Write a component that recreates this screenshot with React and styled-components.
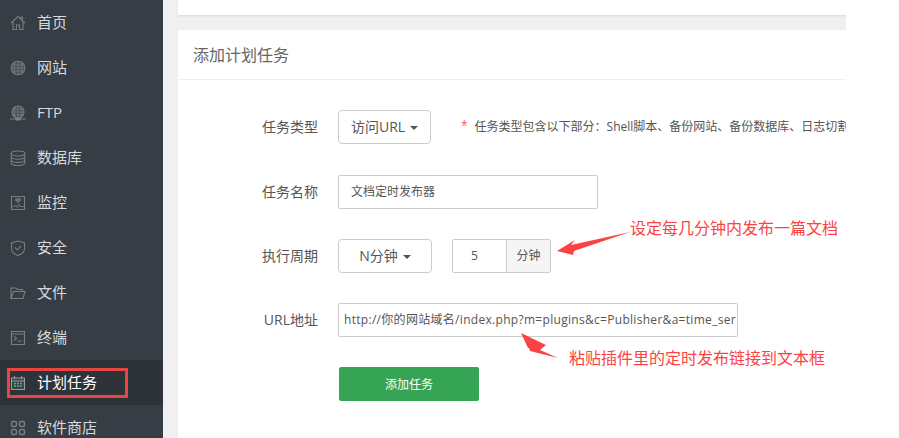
import React from "react";
import styled, { createGlobalStyle } from "styled-components";

const Global = createGlobalStyle`
  html, body { margin: 0; padding: 0; background: #fff; }
  body { font-family: "Open Sans", "Noto Sans CJK SC", sans-serif; overflow: hidden; }
  * { box-sizing: border-box; }
`;

const Page = styled.div`
  position: relative;
  display: flex;
  width: 899px;
  height: 438px;
  overflow: hidden;
  background: #fff;
`;

const Sidebar = styled.nav`
  width: 163px;
  height: 438px;
  flex: none;
  background: #363d44;
  overflow: hidden;
`;

const NavItem = styled.div`
  display: flex;
  align-items: center;
  height: 45px;
  padding-left: 10px;
  gap: 11px;
  background: ${(p) => (p.$active ? "#2e333a" : "transparent")};
  color: ${(p) => (p.$active ? "#fff" : "#d6dade")};
  font-size: 15px;
  line-height: 20px;
`;

const NavText = styled.span`
  padding-bottom: 2px;
`;

const NavIcon = styled.svg`
  width: 16px;
  height: 16px;
  flex: none;
  fill: none;
  stroke: #7a7e82;
  stroke-width: 1.1;
`;

const Main = styled.main`
  width: 683px;
  height: 438px;
  flex: none;
  padding-left: 15px;
  background: #f0f0f0;
  overflow: hidden;
`;

const TopCard = styled.div`
  height: 15px;
  background: #fff;
  box-shadow: 0 1px 2px rgba(0, 0, 0, 0.1);
`;

const Card = styled.section`
  margin-top: 15px;
  height: 408px;
  background: #fff;
`;

const CardTitle = styled.h2`
  margin: 0;
  height: 50px;
  padding: 0 0 1px 15px;
  display: flex;
  align-items: center;
  border-bottom: 1px solid #eee;
  font-size: 16px;
  font-weight: 400;
  color: #666;
`;

const Form = styled.div`
  display: flex;
  flex-direction: column;
  gap: 30px;
  padding-top: 30px;
`;

const Row = styled.div`
  display: flex;
  align-items: center;
  height: 34px;
  margin-bottom: ${(p) => p.$extra || 0}px;
  white-space: nowrap;
`;

const Label = styled.label`
  width: 140px;
  flex: none;
  padding-bottom: 2px;
  text-align: right;
  font-size: 14px;
  color: #555;
`;

const Select = styled.div`
  display: flex;
  flex: none;
  align-items: center;
  justify-content: center;
  gap: 5px;
  margin-left: 20px;
  width: ${(p) => p.$w}px;
  height: 34px;
  padding-bottom: 2px;
  border: 1px solid #ccc;
  border-radius: 4px;
  font-size: 14px;
  color: #555;
`;

const Caret = styled.i`
  width: 0;
  height: 0;
  margin-top: 3px;
  border-top: 4px solid #555;
  border-left: 4px solid transparent;
  border-right: 4px solid transparent;
`;

const Hint = styled.div`
  display: flex;
  flex: none;
  gap: 7px;
  margin-left: 30px;
  padding-bottom: 2px;
  font-size: 12px;
  color: #555;
`;

const Star = styled.span`
  color: #f25a5a;
`;

const Input = styled.div`
  display: flex;
  flex: none;
  align-items: center;
  margin-left: 20px;
  width: ${(p) => p.$w}px;
  height: 34px;
  padding-left: ${(p) => p.$pad}px;
  padding-bottom: 2px;
  border: 1px solid #ccc;
  border-radius: 2px;
  font-size: 12px;
  letter-spacing: ${(p) => p.$track || 0}px;
  color: #555;
  overflow: hidden;
`;

const Group = styled.div`
  display: flex;
  flex: none;
  margin-left: 20px;
  height: 34px;
  width: 99px;
  border: 1px solid #ccc;
  border-radius: 2px;
  font-size: 12px;
  color: #555;
`;

const GroupValue = styled.div`
  width: 53px;
  padding-left: 18px;
  line-height: 32px;
`;

const GroupAddon = styled.div`
  flex: 1;
  text-align: center;
  line-height: 32px;
  background: #f5f5f5;
  border-left: 1px solid #ccc;
`;

const Submit = styled.button`
  margin: 30px 0 0 161px;
  display: block;
  width: 140px;
  height: 34px;
  padding-bottom: 2px;
  border: 0;
  border-radius: 2px;
  background: #35a455;
  color: #fff;
  font-family: inherit;
  font-size: 12px;
`;

const Note = styled.span`
  position: absolute;
  left: ${(p) => p.$x}px;
  top: ${(p) => p.$y}px;
  font-family: "Noto Sans CJK SC", sans-serif;
  font-size: 16px;
  line-height: 20px;
  color: #fb4343;
  white-space: nowrap;
`;

const Arrow = styled.svg`
  position: absolute;
  left: 0;
  top: 0;
  width: 899px;
  height: 438px;
  pointer-events: none;
`;

const Mark = styled.div`
  position: absolute;
  left: 7px;
  top: 368px;
  width: 121px;
  height: 30px;
  border: 3px solid #e84545;
  pointer-events: none;
`;

const icons = {
  home: <path d="M1 8 8 1.500 15 8M3 6.500v8h3.500V10h3v4.500H13v-8M11 3.500V2h1.500v3" />,
  globe: (
    <>
      <circle cx="8" cy="8" r="6.800" fill="#474d53" />
      <path d="M1.500 8h13M2.500 5h11M2.500 11h11M8 1.500v13M5 2.200c-1.300 3.400-1.300 8.200 0 11.600M11 2.200c1.300 3.400 1.300 8.200 0 11.600" strokeWidth="0.800" />
    </>
  ),
  ftp: (
    <>
      <circle cx="8" cy="7" r="6" fill="#444a50" />
      <path d="M2 7h12M3 4.200h10M3 9.800h10M8 1v12M5.300 1.800c-1.100 3-1.100 7.400 0 10.400M10.700 1.800c1.100 3 1.100 7.400 0 10.400" strokeWidth="0.800" />
      <path d="M0 14h16M6 13h4v2H6z" />
    </>
  ),
  db: (
    <>
      <ellipse cx="8" cy="3.500" rx="6.800" ry="2.500" />
      <path d="M1.200 3.500v9.500c0 1.400 3 2.500 6.800 2.500s6.800-1.100 6.800-2.500V3.500M1.200 6.700c0 1.400 3 2.500 6.800 2.500s6.800-1.100 6.800-2.500M1.200 9.900c0 1.400 3 2.500 6.800 2.500s6.800-1.100 6.800-2.500" />
    </>
  ),
  monitor: (
    <>
      <path d="M1.500 1.500h13v13h-13z" />
      <path d="M2 11.500h3l1-1.500 1.300 2.500L9 9l1 2.500h4" strokeWidth="0.800" />
      <path d="M5.500 3.500h5v2.500h-5zM7.300 6h1.400v1.500H7.300z" fill="#6a6e72" strokeWidth="0.500" />
    </>
  ),
  shield: <path d="M8 1 14.500 3v5.500C14.500 12 11 14.500 8 15.500 5 14.500 1.500 12 1.500 8.500V3L8 1ZM5 7.500l2.300 2.300L11 6" />,
  folder: <path d="M1 13.500V3h5l1.500 1.500h5V6.500M1 13.500h12l2-7H3.500l-2.500 7Z" />,
  terminal: <path d="M1.500 1.500h13v13h-13zM1.500 4h13M4 6.500l2.500 2-2.500 2M7.500 11H12" strokeWidth="1.200" />,
  tasks: (
    <>
      <path d="M1.500 3h13v11.500h-13zM1.500 6h13M4.500 1v3M11.500 1v3" stroke="#9a9da0" fill="#3c4248" />
      <path d="M4 8.500h8M4 11h8" stroke="#3fc06a" strokeWidth="1.500" strokeDasharray="2 1" />
    </>
  ),
  store: (
    <>
      <rect x="1.500" y="1.500" width="5" height="5" rx="1.500" strokeWidth="1.500" />
      <rect x="9.500" y="1.500" width="5" height="5" rx="1.500" strokeWidth="1.500" />
      <rect x="1.500" y="9.500" width="5" height="5" rx="1.500" strokeWidth="1.500" />
      <rect x="9.500" y="9.500" width="5" height="5" rx="1.500" strokeWidth="1.500" />
    </>
  ),
};

const menu = [
  ["home", "首页"],
  ["globe", "网站"],
  ["ftp", "FTP"],
  ["db", "数据库"],
  ["monitor", "监控"],
  ["shield", "安全"],
  ["folder", "文件"],
  ["terminal", "终端"],
  ["tasks", "计划任务"],
  ["store", "软件商店"],
];

export default function App() {
  return (
    <Page>
      <Global />
      <Sidebar>
        {menu.map(([icon, text]) => (
          <NavItem key={text} $active={icon === "tasks"}>
            <NavIcon viewBox="0 0 16 16">{icons[icon]}</NavIcon>
            <NavText>{text}</NavText>
          </NavItem>
        ))}
      </Sidebar>
      <Main>
        <TopCard />
        <Card>
          <CardTitle>添加计划任务</CardTitle>
          <Form>
            <Row $extra={1}>
              <Label>任务类型</Label>
              <Select $w={93}>访问URL<Caret /></Select>
              <Hint>
                <Star>*</Star>
                任务类型包含以下部分：Shell脚本、备份网站、备份数据库、日志切割
              </Hint>
            </Row>
            <Row>
              <Label>任务名称</Label>
              <Input $w={260} $pad={12}>文档定时发布器</Input>
            </Row>
            <Row>
              <Label>执行周期</Label>
              <Select $w={94}>N分钟<Caret /></Select>
              <Group>
                <GroupValue>5</GroupValue>
                <GroupAddon>分钟</GroupAddon>
              </Group>
            </Row>
            <Row>
              <Label>URL地址</Label>
              <Input $w={400} $pad={5} $track={0.3}>http://你的网站域名/index.php?m=plugins&amp;c=Publisher&amp;a=time_ser</Input>
            </Row>
          </Form>
          <Submit>添加任务</Submit>
        </Card>
      </Main>
      <Mark />
      <Note $x={630} $y={217}>设定每几分钟内发布一篇文档</Note>
      <Note $x={569} $y={347}>粘贴插件里的定时发布链接到文本框</Note>
      <Arrow viewBox="0 0 899 438">
        <path d="M557 251 575 240 571 245 630 232 574 251 573 255Z" fill="#fb4343" />
        <path d="M521 333 546 345 540 350 558 358 530 351 529 348 528 348Z" fill="#fb4343" />
      </Arrow>
    </Page>
  );
}
